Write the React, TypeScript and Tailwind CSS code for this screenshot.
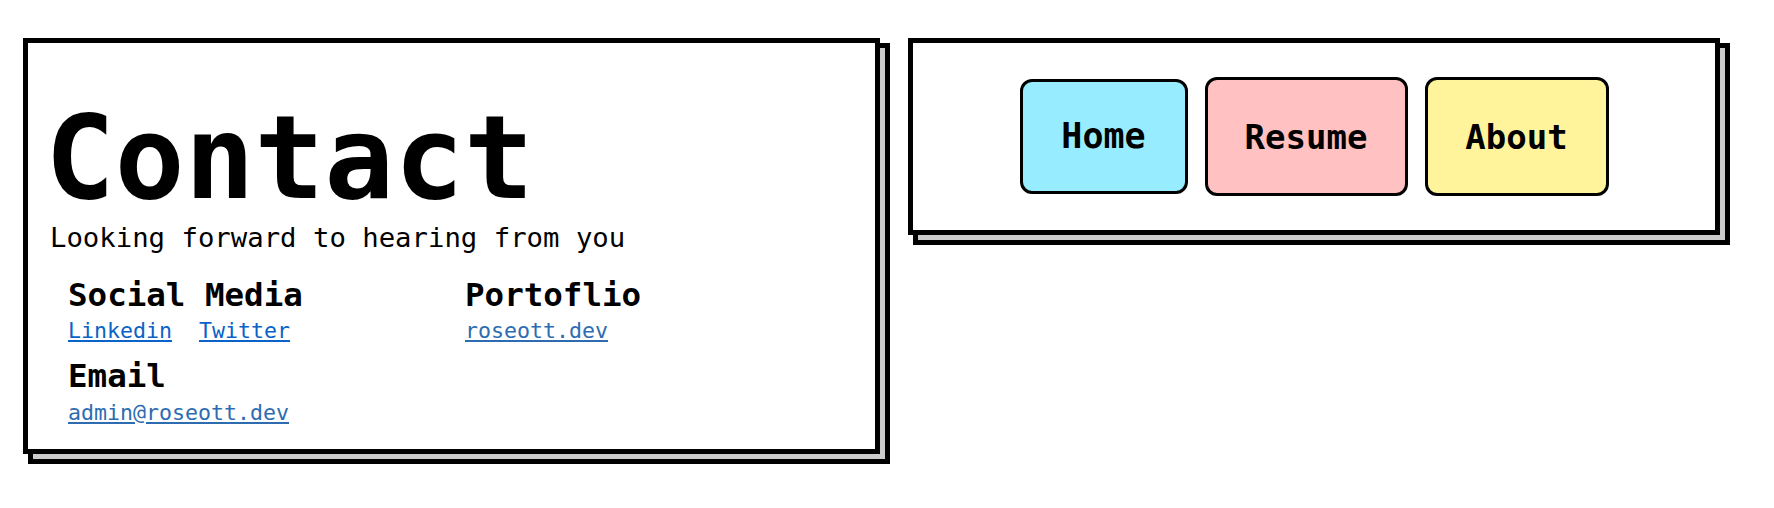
import React from "react";

const mono = { fontFamily: '"DejaVu Sans Mono", "Liberation Mono", monospace' };

function Card({ className, children }: { className: string; children: React.ReactNode }) {
  return (
    <div className={"relative shrink-0 " + className}>
      <div className="absolute left-[5px] top-[5px] right-[-10px] bottom-[-10px] border-[5px] border-black bg-[#cbcbcb]" />
      <div className="relative h-full border-[5px] border-black bg-white">{children}</div>
    </div>
  );
}

export default function App() {
  return (
    <div className="min-h-[508px] w-[1774px] bg-white text-black" style={mono}>
      <div className="flex items-start gap-[28px] pl-[23px] pt-[38px]">
        <Card className="w-[857px]">
          <div className="pl-[19px] pt-[57px] pb-[26px]">
            <h1 className="-ml-[2px] text-[116px] font-bold leading-none">Contact</h1>
            <p className="ml-[3px] mt-[8px] text-[27.3px] leading-none">Looking forward to hearing from you</p>
            <div className="ml-[21px] mt-[28px] grid grid-cols-[397px_1fr]">
              <div>
                <h2 className="text-[32.5px] font-bold leading-none">Social Media</h2>
                <div className="mt-[8px] flex gap-[27px] text-[21.6px] leading-none">
                  <a href="#" className="text-[#0a63c6] underline">Linkedin</a>
                  <a href="#" className="text-[#0a63c6] underline">Twitter</a>
                </div>
              </div>
              <div>
                <h2 className="text-[32.5px] font-bold leading-none">Portoflio</h2>
                <div className="mt-[8px] text-[21.6px] leading-none">
                  <a href="#" className="text-[#2e6cb2] underline">roseott.dev</a>
                </div>
              </div>
              <div className="mt-[19px]">
                <h2 className="text-[32.5px] font-bold leading-none">Email</h2>
                <div className="mt-[9px] text-[21.6px] leading-none">
                  <a href="#" className="text-[#2e6cb2] underline">admin@roseott.dev</a>
                </div>
              </div>
            </div>
          </div>
        </Card>
        <Card className="w-[812px]">
          <div className="flex h-[187px] items-center justify-center gap-[17px]">
            <a href="#" className="flex h-[115px] w-[168px] items-center justify-center rounded-[12px] border-[3px] border-black bg-[#98ecff] text-[35px] font-bold leading-none">
              Home
            </a>
            <a href="#" className="flex h-[119px] w-[203px] items-center justify-center rounded-[12px] border-[3px] border-black bg-[#ffc1c1] text-[34px] font-bold leading-none">
              Resume
            </a>
            <a href="#" className="flex h-[119px] w-[184px] items-center justify-center rounded-[12px] border-[3px] border-black bg-[#fff49c] text-[34px] font-bold leading-none">
              About
            </a>
          </div>
        </Card>
      </div>
    </div>
  );
}
